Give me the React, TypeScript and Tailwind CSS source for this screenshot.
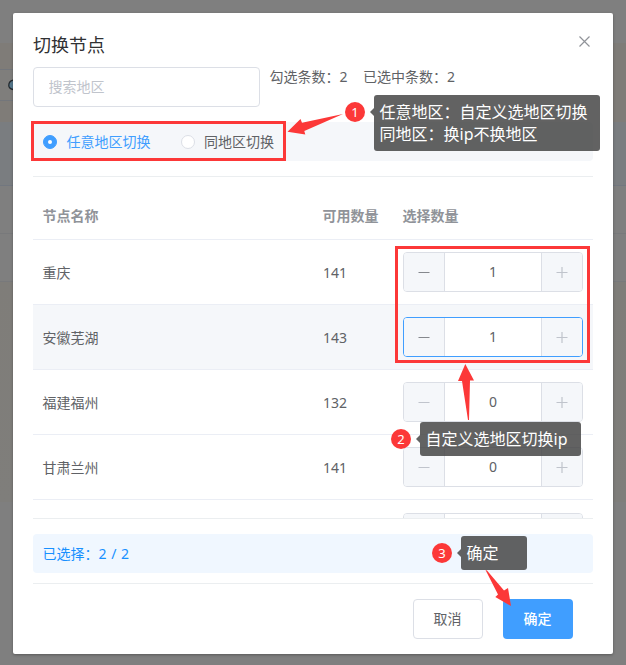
import { useState } from 'react';

type NodeRow = { name: string; available: number; count: number };

const initialRows: NodeRow[] = [
  { name: '重庆', available: 141, count: 1 },
  { name: '安徽芜湖', available: 143, count: 1 },
  { name: '福建福州', available: 132, count: 0 },
  { name: '甘肃兰州', available: 141, count: 0 },
];

const LIMIT = 2;

function Sign({ plus, muted }: { plus?: boolean; muted?: boolean }) {
  return (
    <svg width="12" height="12" viewBox="0 0 12 12" className={muted ? 'text-[#c0c4cc]' : 'text-[#85888d]'}>
      <path d={plus ? 'M0.5 6.5H11.5M6 1V12' : 'M0.5 6.5H11.5'} stroke="currentColor" strokeWidth="1.2" fill="none" />
    </svg>
  );
}

type StepperProps = { value?: number; full?: boolean; active?: boolean; onChange?: (value: number) => void };

function Stepper({ value = 0, full, active, onChange }: StepperProps) {
  return (
    <div className={`flex h-10 w-[180px] overflow-hidden rounded border bg-white ${active ? 'border-[#409eff]' : 'border-[#dcdfe6]'}`}>
      <button
        className="flex w-[41px] shrink-0 items-center justify-center border-r border-[#dcdfe6] bg-[#f5f7fa]"
        onClick={() => onChange?.(Math.max(0, value - 1))}
      >
        <Sign muted={value === 0} />
      </button>
      <span className="flex-1 text-center leading-[38px]">{onChange && value}</span>
      <button
        className="flex w-[41px] shrink-0 items-center justify-center border-l border-[#dcdfe6] bg-[#f5f7fa]"
        onClick={() => !full && onChange?.(value + 1)}
      >
        <Sign plus muted />
      </button>
    </div>
  );
}

function Radio({ label, checked, onSelect }: { label: string; checked: boolean; onSelect: () => void }) {
  return (
    <button className={`flex items-center gap-[9.5px] ${checked ? 'text-[#409eff]' : 'text-[#606266]'}`} onClick={onSelect}>
      <span
        className={`flex size-3.5 items-center justify-center rounded-full border ${
          checked ? 'border-[#409eff] bg-[#409eff]' : 'border-[#dcdfe6] bg-white'
        }`}
      >
        {checked && <span className="size-1 rounded-full bg-white" />}
      </span>
      {label}
    </button>
  );
}

function Badge({ n, className }: { n: number; className: string }) {
  return (
    <span className={`absolute size-5 rounded-full bg-[#fc3838] text-center text-[13px] leading-5 text-white ${className}`}>
      {n}
    </span>
  );
}

function Tip({ lines, className }: { lines: string[]; className: string }) {
  return (
    <div className={`absolute rounded-[3px] bg-[#404040]/82 px-[5.5px] py-[6px] text-base leading-[22px] whitespace-nowrap text-white ${className}`}>
      <span className="absolute top-[13px] -left-1 h-0 w-0 border-y-4 border-r-4 border-y-transparent border-r-[#404040]/82" />
      {lines.map((line) => (
        <p key={line}>{line}</p>
      ))}
    </div>
  );
}

// Dimmed page behind the dialog
function Backdrop() {
  return (
    <div className="flex h-[665px] flex-col bg-[#7f7f7f]">
      <div className="h-[43px]" />
      <div className="h-[79px] bg-[#7f7c78] pt-[26px]">
        <div className="flex h-8 w-[13px] items-center justify-end overflow-hidden border-y border-[#73767b] bg-[#7f7e7c]">
          <svg width="5" height="12" viewBox="0 0 5 12">
            <path d="M5 1.2C2 2 0.8 4 0.8 6.5c0 2 1.2 3.3 4.2 4" fill="#56788c" stroke="#22282d" strokeWidth="1.3" />
          </svg>
        </div>
      </div>
      <div className="h-16 border-b border-[#72777f] bg-[#7a7d80]" />
      <div className="h-12 border-b border-[#78797b]" />
      <div className="h-12 border-b border-[#78797b]" />
      <div className="h-[220px] bg-gradient-to-b from-[#7f7d79] to-[#7f7e7b]" />
    </div>
  );
}

function Annotations() {
  return (
    <div className="pointer-events-none absolute inset-0">
      <div className="absolute top-[121px] left-[31px] h-10 w-[255px] border-3 border-[#fc3838]" />
      <div className="absolute top-[246px] left-[395px] h-[117px] w-[195px] border-3 border-[#fc3838]" />

      <Badge n={1} className="top-[102px] left-[345px]" />
      <Tip lines={['任意地区：自定义选地区切换', '同地区：换ip不换地区']} className="top-[95px] left-[374px] h-14 w-[226px]" />
      <Badge n={2} className="top-[429px] left-[391px]" />
      <Tip lines={['自定义选地区切换ip']} className="top-[422px] left-[420px] h-[34px] w-[161px]" />
      <Badge n={3} className="top-[543px] left-[432px]" />
      <Tip lines={['确定']} className="top-[536px] left-[461px] h-[34px] w-[66px]" />

      <svg className="absolute inset-0" width="626" height="665" fill="#fc3838">
        <path d="M287.5 131.7L300.5 119L302 122.7L343 114L304.3 131L305.3 134.6Z" />
        <path d="M465.3 364L474 380.5H470L469 420H468L462 381H458Z" />
        <path d="M485.5 570L487 570.5L504 590.5L508 588L511 606L495.3 597L498 594.5Z" />
      </svg>
    </div>
  );
}

export default function App() {
  const [rows, setRows] = useState(initialRows);
  const [mode, setMode] = useState('any');
  const total = rows.reduce((sum, row) => sum + row.count, 0);

  const setCount = (index: number, count: number) =>
    setRows(rows.map((row, i) => (i === index ? { ...row, count } : row)));

  return (
    <div className="relative h-[665px] w-[626px] overflow-hidden font-['Noto_Sans','Noto_Sans_CJK_SC',sans-serif] text-sm text-[#606266]">
      <Backdrop />

      <div className="absolute top-[13px] left-[13px] flex h-[641px] w-[600px] flex-col rounded-[2px] bg-white px-5 shadow-[0_1px_3px_rgba(0,0,0,0.3)]">
        <header className="flex h-[54px] items-center justify-between pt-2.5">
          <h1 className="text-lg leading-6 text-[#303133]">切换节点</h1>
          <button className="mr-[3px] mb-[7px]">
            <svg width="11" height="11" viewBox="0 0 11 11" stroke="#909399" strokeWidth="1.2">
              <path d="M0.5 0.5L10.5 10.5M10.5 0.5L0.5 10.5" />
            </svg>
          </button>
        </header>

        <div className="flex h-10 gap-[9.5px]">
          <input
            className="w-[227px] rounded border border-[#dcdfe6] px-[14.5px] placeholder:text-[#c0c4cc]"
            placeholder="搜索地区"
          />
          <p className="leading-5">勾选条数：{total}</p>
          <p className="ml-1.5 leading-5">已选中条数：{total}</p>
        </div>

        <div className="mt-[15px] flex h-[39px] shrink-0 items-center gap-[30px] rounded bg-[#f5f7fa] px-2.5">
          <Radio label="任意地区切换" checked={mode === 'any'} onSelect={() => setMode('any')} />
          <Radio label="同地区切换" checked={mode === 'same'} onSelect={() => setMode('same')} />
        </div>

        <div className="mt-[15px] flex h-[343px] shrink-0 flex-col border-y border-[#ebeef0] pt-4">
          <div className="grid h-[47px] shrink-0 grid-cols-[280px_80px_1fr] items-center border-b border-[#ebeef5] pl-[9.5px] font-bold text-[#909399]">
            <span>节点名称</span>
            <span>可用数量</span>
            <span>选择数量</span>
          </div>
          <div className="flex-1 overflow-hidden">
            {rows.map((row, i) => (
              <div
                key={row.name}
                className={`grid h-[65px] grid-cols-[280px_80px_1fr] items-center border-b border-[#ebeef5] px-2.5 ${i === 1 ? 'bg-[#f5f7fa]' : ''}`}
              >
                <span className="-ml-[0.5px] pt-0.5">{row.name}</span>
                <span className="pt-px">{row.available}</span>
                <Stepper value={row.count} full={total >= LIMIT} active={i === 1} onChange={(n) => setCount(i, n)} />
              </div>
            ))}
            <div className="flex h-[65px] items-center justify-end px-2.5">
              <Stepper />
            </div>
          </div>
        </div>

        <div className="mt-[15px] h-[39px] shrink-0 rounded bg-[#f0f7ff] px-[9.5px] leading-[39px] [word-spacing:1px] text-[#1890ff]">
          已选择：{total} / {LIMIT}
        </div>

        <footer className="mt-2.5 flex justify-end gap-5 border-t border-[#ebeef0] pt-[15px] pr-5">
          <button className="h-10 w-[70px] rounded border border-[#dcdfe6] pr-px">取消</button>
          <button className="h-10 w-[70px] rounded bg-[#409eff] pr-px font-medium text-white">确定</button>
        </footer>
      </div>

      <Annotations />
    </div>
  );
}
